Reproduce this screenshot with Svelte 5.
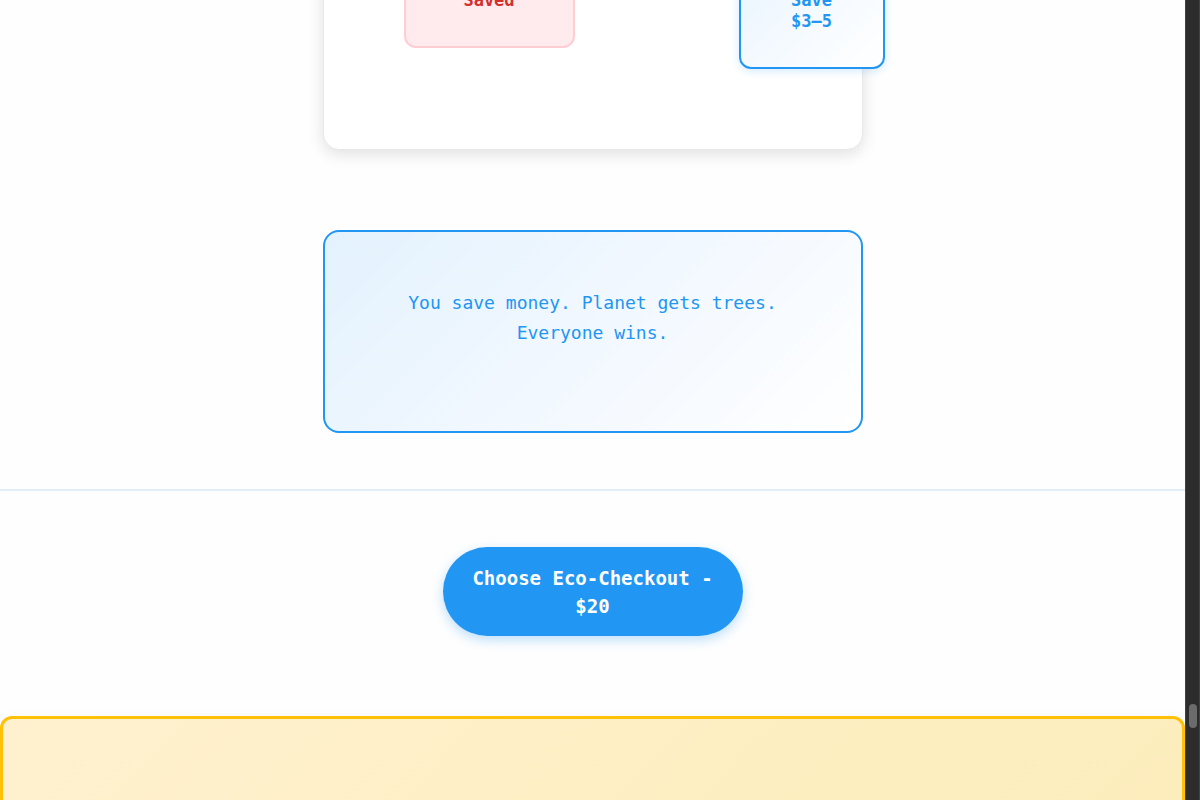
<script>
  const savings = [
    { kind: 'none', lines: ['Saved'] },
    { kind: 'eco', lines: ['Save', '$3–5'] }
  ];
  const price = 20;
</script>

<div class="window">
  <main>
    <section class="offer">
      <div class="comparison">
        {#each savings as item}
          <div class="saving {item.kind}">
            {#each item.lines as line}
              <span>{line}</span>
            {/each}
          </div>
        {/each}
      </div>

      <div class="callout">
        <p>You save money. Planet gets trees. Everyone wins.</p>
      </div>
    </section>

    <section class="action">
      <button type="button">Choose Eco-Checkout - ${price}</button>
    </section>

    <section class="highlight"></section>
  </main>

  <div class="track" aria-hidden="true">
    <div class="thumb"></div>
  </div>
</div>

<style>
  :global(body) {
    margin: 0;
    background: #fefefe;
  }

  .window {
    display: flex;
    height: 100vh;
    overflow: hidden;
    font-family: "DejaVu Sans Mono", "Liberation Mono", monospace;
  }

  .window * {
    box-sizing: border-box;
  }

  main {
    flex: 1;
    min-width: 0;
    display: flex;
    flex-direction: column;
    overflow: hidden;
    background: #fefefe;
  }

  .offer {
    flex: none;
    display: flex;
    flex-direction: column;
    align-items: center;
    gap: 80px;
    padding-bottom: 56px;
    border-bottom: 2px solid #e3eff8;
  }

  .comparison,
  .callout {
    width: 100%;
    max-width: 540px;
    border-radius: 16px;
  }

  .comparison {
    display: flex;
    justify-content: space-between;
    align-items: flex-start;
    margin-top: -41px;
    padding: 0 0 80px 80px;
    border: 1px solid #e8e8e8;
    background: #fff;
    box-shadow: 0 4px 16px rgba(0, 0, 0, 0.12);
  }

  .saving {
    display: flex;
    flex-direction: column;
    align-items: center;
    padding: 28px 48px 35px;
    border: 2px solid;
    border-radius: 12px;
    font-size: 17px;
    font-weight: 700;
    line-height: 21px;
  }

  .none {
    width: 171px;
    border-color: #ffcdd2;
    background: #ffebee;
    color: #d32f2f;
  }

  .eco {
    width: 146px;
    margin-right: -23px;
    border-color: #2196f3;
    background: linear-gradient(135deg, #e9f4fe 0%, #f7fbff 60%, #fff 100%);
    color: #2196f3;
    box-shadow: 0 2px 8px rgba(33, 150, 243, 0.2);
  }

  .callout {
    padding: 56px 56px 83px;
    border: 2px solid #2196f3;
    background: linear-gradient(135deg, #e3f2fd 0%, #f0f7ff 45%, #fff 100%);
    color: #2196f3;
    font-size: 18px;
    line-height: 30px;
    text-align: center;
  }

  .callout p {
    margin: 0;
  }

  .action {
    flex: none;
    display: flex;
    justify-content: center;
    padding: 56px 16px 80px;
  }

  button {
    width: 300px;
    padding: 17px 24px 16px;
    border: 0;
    border-radius: 50px;
    background: #2196f3;
    color: #fff;
    font: 700 19px/28px "DejaVu Sans Mono", "Liberation Mono", monospace;
    box-shadow: 0 4px 12px rgba(33, 150, 243, 0.3);
    cursor: pointer;
  }

  .highlight {
    flex: none;
    height: 600px;
    border: 3px solid #ffc107;
    border-radius: 12px;
    background: linear-gradient(135deg, #fff1cf 0%, #fdeec0 50%, #fcecb9 100%);
    box-shadow: 0 4px 16px rgba(0, 0, 0, 0.05);
  }

  .track {
    flex: none;
    width: 15px;
    padding: 88vh 2px 0 3px;
    border: solid #424242;
    border-width: 0 1px;
    background: #2c2c2c;
  }

  .thumb {
    width: 8px;
    height: 24px;
    border-radius: 4px;
    background: #6b6b6b;
  }
</style>
